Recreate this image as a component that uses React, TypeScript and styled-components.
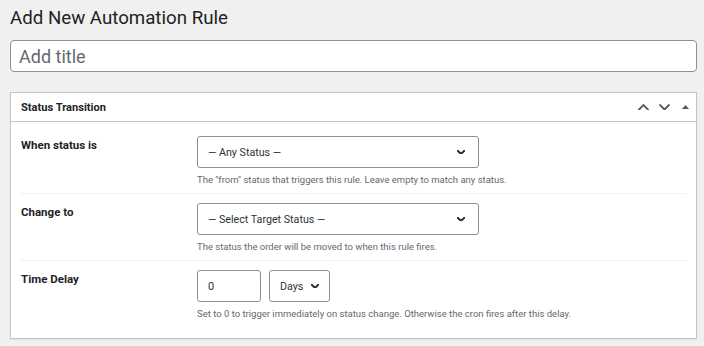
import React from 'react';
import styled, { createGlobalStyle } from 'styled-components';

const GlobalStyle = createGlobalStyle`
    body {
        margin: 0;
        background: #f0f0f1;
        font-family: Roboto, 'Noto Sans', sans-serif;
        color: #1d2327;
    }
`;

const Page = styled.div`
    padding: 4px 7px 8px 10px;
`;

const Heading = styled.h1`
    margin: 0;
    font-size: 18.7px;
    font-weight: 400;
    line-height: 29px;
    color: #1d2327;
`;

const TitleInput = styled.input`
    display: block;
    box-sizing: border-box;
    width: 100%;
    height: 32px;
    margin-top: 7px;
    padding: 0 8px;
    border: 1px solid #8c8f94;
    border-radius: 4px;
    background: #fff;
    font-family: inherit;
    font-size: 18px;
    color: #2c3338;
    &::placeholder {
        color: #646970;
    }
`;

const Postbox = styled.div`
    margin-top: 20px;
    background: #fff;
    border: 1px solid #c3c4c7;
    box-shadow: 0 1px 1px rgba(0, 0, 0, 0.04);
`;

const PostboxHeader = styled.div`
    display: flex;
    align-items: center;
    height: 28px;
    padding: 0 0 0 10px;
    border-bottom: 1px solid #c3c4c7;
`;

const PostboxTitle = styled.h2`
    flex: 1;
    margin: 0;
    font-size: 11.1px;
    font-weight: 700;
    color: #1d2327;
`;

const HeaderActions = styled.div`
    display: flex;
    align-items: center;
`;

const HandleButton = styled.span`
    display: flex;
    align-items: center;
    justify-content: center;
    width: 21px;
    height: 28px;
    color: #50575e;
`;

const PostboxBody = styled.div`
    padding: 5px 10px 11px;
`;

const FieldRow = styled.div`
    display: grid;
    grid-template-columns: 176px 1fr;
    padding: 9px 0 7px;
    & + & {
        border-top: 1px solid #f0f0f1;
    }
`;

const FieldLabel = styled.label`
    padding-top: 2px;
    font-size: 11.5px;
    font-weight: 700;
    line-height: 14px;
    color: #1d2327;
`;

const Controls = styled.div`
    display: flex;
    gap: 8px;
`;

const SelectBox = styled.div<{ $width: number }>`
    box-sizing: border-box;
    display: flex;
    align-items: center;
    justify-content: space-between;
    gap: 8px;
    width: ${p => p.$width}px;
    height: 32px;
    padding: 0 13px 0 10px;
    border: 1px solid #8c8f94;
    border-radius: 3px;
    background: #fff;
    font-size: 10.7px;
    color: #2c3338;
    svg {
        flex-shrink: 0;
    }
`;

const NumberBox = styled.div`
    box-sizing: border-box;
    display: flex;
    align-items: center;
    width: 64px;
    height: 32px;
    padding: 0 10px;
    border: 1px solid #8c8f94;
    border-radius: 3px;
    background: #fff;
    font-size: 11px;
    color: #2c3338;
`;

const Description = styled.p`
    margin: 5px 0 0;
    font-size: 9.5px;
    line-height: 13px;
    color: #646970;
`;

const Chevron: React.FC<{ dir: 'up' | 'down'; size?: number; stroke?: number }> = ({
    dir,
    size = 11,
    stroke = 1.8,
}) => (
    <svg width={size} height={size * 0.6} viewBox="0 0 10 6" fill="none">
        <polyline
            points={dir === 'down' ? '1,1 5,5 9,1' : '1,5 5,1 9,5'}
            stroke="currentColor"
            strokeWidth={stroke}
            strokeLinecap="square"
            vectorEffect="non-scaling-stroke"
        />
    </svg>
);

const Triangle = () => (
    <svg width="7" height="4" viewBox="0 0 7 4">
        <polygon points="0,4 3.5,0 7,4" fill="#50575e" />
    </svg>
);

const Select: React.FC<{ label: string; width: number }> = ({ label, width }) => (
    <SelectBox $width={width}>
        <span>{label}</span>
        <Chevron dir="down" size={8} stroke={2} />
    </SelectBox>
);

export default function App() {
    return (
        <Page>
            <GlobalStyle />
            <Heading>Add New Automation Rule</Heading>
            <TitleInput placeholder="Add title" />
            <Postbox>
                <PostboxHeader>
                    <PostboxTitle>Status Transition</PostboxTitle>
                    <HeaderActions>
                        <HandleButton>
                            <Chevron dir="up" />
                        </HandleButton>
                        <HandleButton>
                            <Chevron dir="down" />
                        </HandleButton>
                        <HandleButton>
                            <Triangle />
                        </HandleButton>
                    </HeaderActions>
                </PostboxHeader>
                <PostboxBody>
                    <FieldRow>
                        <FieldLabel>When status is</FieldLabel>
                        <div>
                            <Select label="— Any Status —" width={282} />
                            <Description>
                                The "from" status that triggers this rule. Leave empty to match any status.
                            </Description>
                        </div>
                    </FieldRow>
                    <FieldRow>
                        <FieldLabel>Change to</FieldLabel>
                        <div>
                            <Select label="— Select Target Status —" width={282} />
                            <Description>The status the order will be moved to when this rule fires.</Description>
                        </div>
                    </FieldRow>
                    <FieldRow>
                        <FieldLabel>Time Delay</FieldLabel>
                        <div>
                            <Controls>
                                <NumberBox>0</NumberBox>
                                <Select label="Days" width={61} />
                            </Controls>
                            <Description>
                                Set to 0 to trigger immediately on status change. Otherwise the cron fires after this delay.
                            </Description>
                        </div>
                    </FieldRow>
                </PostboxBody>
            </Postbox>
        </Page>
    );
}
